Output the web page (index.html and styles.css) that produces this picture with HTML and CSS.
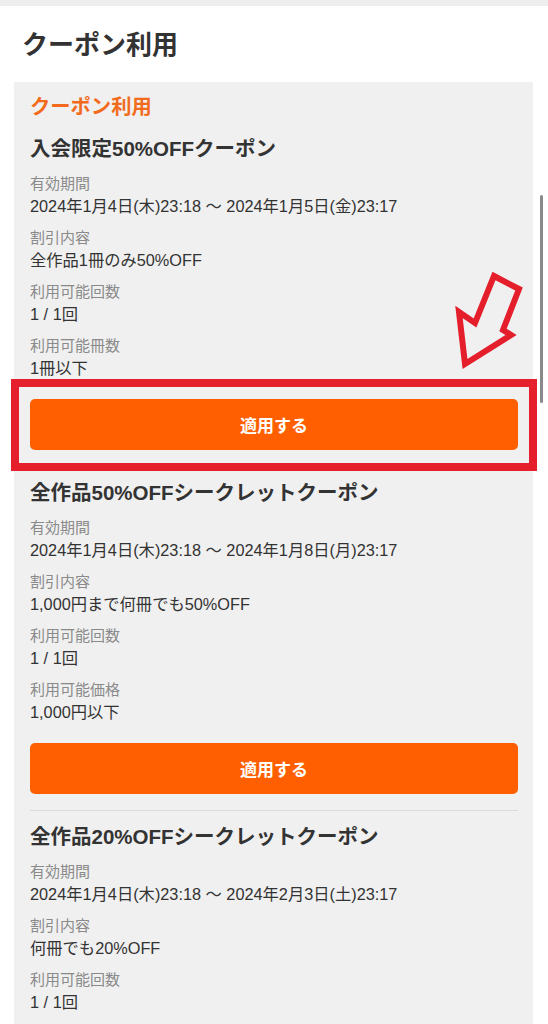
FILE: index.html
```html
<!DOCTYPE html>
<html lang="ja">

<head>
    <meta charset="UTF-8">
    <meta name="viewport" content="width=device-width, initial-scale=1.0">
    <title>クーポン利用</title>
    <link rel="stylesheet" href="styles.css">
</head>

<body>
    <div class="screen">
        <div class="topbar"></div>
        <h1 class="page_title">クーポン利用</h1>

        <div class="panel">
            <h2 class="panel_heading">クーポン利用</h2>

            <!-- coupon 1 -->
            <div class="coupon">
                <h3 class="coupon_title">入会限定50%OFFクーポン</h3>
                <div class="field">
                    <div class="label">有効期間</div>
                    <div class="value">2024年1月4日(木)23:18 〜 2024年1月5日(金)23:17</div>
                </div>
                <div class="field">
                    <div class="label">割引内容</div>
                    <div class="value">全作品1冊のみ50%OFF</div>
                </div>
                <div class="field">
                    <div class="label">利用可能回数</div>
                    <div class="value">1 / 1回</div>
                </div>
                <div class="field">
                    <div class="label">利用可能冊数</div>
                    <div class="value">1冊以下</div>
                </div>
                <button type="button" class="apply_btn">適用する</button>
            </div>

            <!-- coupon 2 -->
            <div class="coupon">
                <h3 class="coupon_title">全作品50%OFFシークレットクーポン</h3>
                <div class="field">
                    <div class="label">有効期間</div>
                    <div class="value">2024年1月4日(木)23:18 〜 2024年1月8日(月)23:17</div>
                </div>
                <div class="field">
                    <div class="label">割引内容</div>
                    <div class="value">1,000円まで何冊でも50%OFF</div>
                </div>
                <div class="field">
                    <div class="label">利用可能回数</div>
                    <div class="value">1 / 1回</div>
                </div>
                <div class="field">
                    <div class="label">利用可能価格</div>
                    <div class="value">1,000円以下</div>
                </div>
                <button type="button" class="apply_btn">適用する</button>
            </div>

            <!-- coupon 3 (rest is below the fold) -->
            <div class="coupon">
                <h3 class="coupon_title">全作品20%OFFシークレットクーポン</h3>
                <div class="field">
                    <div class="label">有効期間</div>
                    <div class="value">2024年1月4日(木)23:18 〜 2024年2月3日(土)23:17</div>
                </div>
                <div class="field">
                    <div class="label">割引内容</div>
                    <div class="value">何冊でも20%OFF</div>
                </div>
                <div class="field">
                    <div class="label">利用可能回数</div>
                    <div class="value">1 / 1回</div>
                </div>
            </div>
        </div>

        <!-- annotation overlays -->
        <div class="highlight_box"></div>
        <svg class="pointer_arrow" width="80" height="110" viewBox="0 0 80 110">
            <polygon points="44,11 69,24 53,65 61,70 15,99 9,47 25,58" fill="none" stroke="#e41e2b" stroke-width="6" stroke-linejoin="miter" />
        </svg>
        <div class="scrollbar"></div>
    </div>
</body>

</html>
```
FILE: styles.css
```css
body {
    margin: 0;
    background: #fff;
    font-family: "Liberation Sans", "Noto Sans CJK JP", sans-serif;
    color: #333;
}

.screen {
    position: relative;
    width: 548px;
    min-height: 1024px;
}

.topbar {
    height: 6px;
    background: #eeeeee;
}

.page_title {
    margin: 0 0 19px;
    padding: 21px 0 0 22px;
    font-size: 26px;
    line-height: 36px;
    font-weight: bold;
    color: #333;
}

.panel {
    margin: 0 15px 0 14px;
    padding: 10px 15px 24px 16px;
    background: #f0f0f0;
}

.panel_heading {
    margin: 0 0 13px;
    font-size: 20.3px;
    line-height: 30px;
    font-weight: bold;
    color: #f26b1d;
}

.coupon + .coupon {
    margin-top: 16px;
    padding-top: 12px;
    border-top: 1px solid #dcdcdc;
}

.coupon_title {
    margin: 0 0 9px;
    font-size: 20.5px;
    line-height: 28px;
    font-weight: bold;
    color: #333;
}

.field + .field {
    margin-top: 8px;
}

.label {
    font-size: 15px;
    line-height: 23px;
    color: #8a8a8a;
}

.value {
    font-size: 16.3px;
    line-height: 23px;
    color: #333;
}

.apply_btn {
    display: block;
    width: 100%;
    height: 51px;
    margin-top: 19px;
    border: none;
    border-radius: 5px;
    background: #ff5f00;
    color: #fff;
    font-family: "Liberation Sans", "Noto Sans CJK JP", sans-serif;
    font-size: 17px;
    font-weight: bold;
}

.highlight_box {
    position: absolute;
    left: 11px;
    top: 379px;
    width: 526px;
    height: 92px;
    box-sizing: border-box;
    border: 8px solid #e51f2b;
}

.pointer_arrow {
    position: absolute;
    left: 450px;
    top: 265px;
}

.scrollbar {
    position: absolute;
    left: 540px;
    top: 195px;
    width: 3px;
    height: 208px;
    border-radius: 2px;
    background: #8a8a8a;
}
```
